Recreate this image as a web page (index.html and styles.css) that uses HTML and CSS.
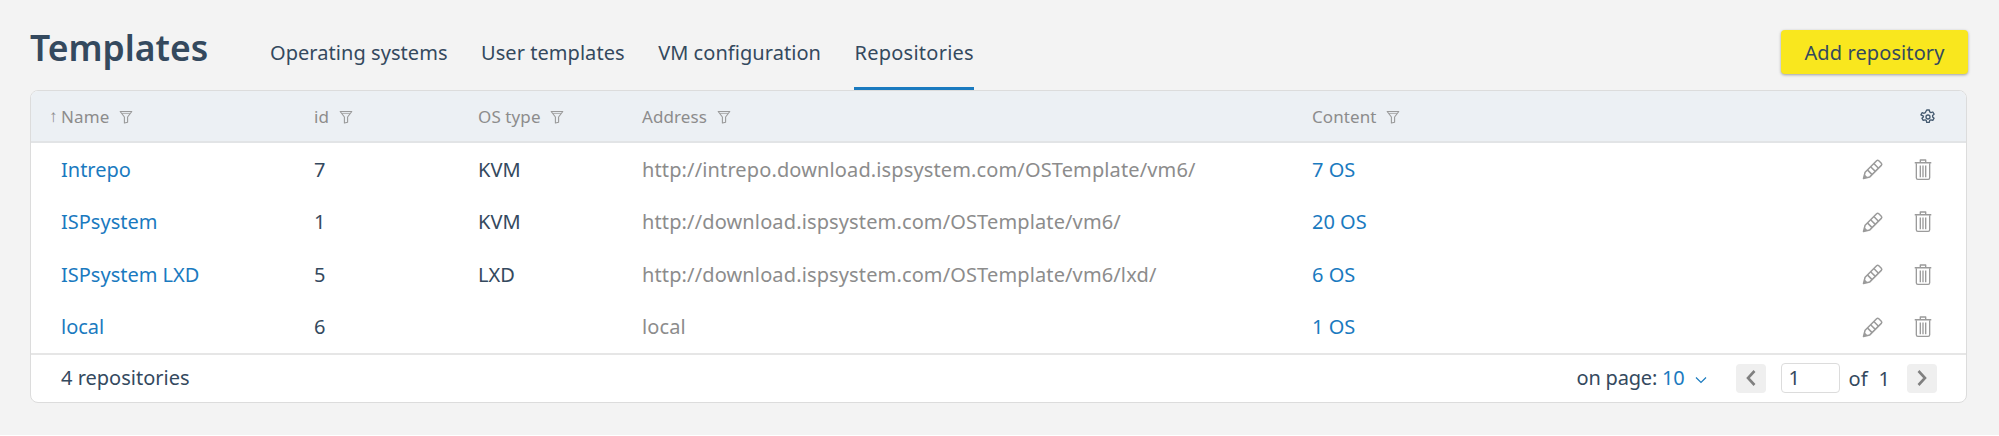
FILE: index.html
```html
<!DOCTYPE html>
<html lang="en">
<head>
<meta charset="utf-8">
<title>Templates</title>
<link rel="stylesheet" href="styles.css">
</head>
<body>
<svg class="defs" width="0" height="0" aria-hidden="true">
  <symbol id="i-filter" viewBox="0 0 14 14"><path d="M1.2 1.5h11.6L8.6 7v5.2L5.4 13V7z" fill="none" stroke="currentColor" stroke-width="1.1" stroke-linejoin="round"/><path d="M3 3.4h8" stroke="currentColor" stroke-width=".8"/></symbol>
  <symbol id="i-pencil" viewBox="0 0 22 22"><g fill="none" stroke="currentColor" stroke-width="1.5" stroke-linejoin="round"><path d="M1.5 20.5l1.6-6.3L14.6 2.7a1.6 1.6 0 0 1 2.2 0l2.5 2.5a1.6 1.6 0 0 1 0 2.2L7.8 18.9z"/><path d="M5.4 11.9l4.7 4.7M8.6 8.7l4.7 4.7M11.8 5.5l4.7 4.7"/></g><path d="M1.5 20.5l1-4.3 3.3 3.3z" fill="currentColor"/></symbol>
  <symbol id="i-trash" viewBox="0 0 20 24"><g fill="none" stroke="currentColor" stroke-width="1.5" stroke-linejoin="round"><path d="M.8 4.5h18.4M7 3.8V1.4h6v2.4"/><path d="M2.6 5v16.2c0 1 .7 1.7 1.7 1.7h11.4c1 0 1.7-.7 1.7-1.7V5"/><path d="M7 7.5v13M10 7.5v13M13 7.5v13"/></g></symbol>
  <symbol id="i-gear" viewBox="0 0 16 16"><g fill="none" stroke="currentColor"><path stroke-width="1.3" stroke-linejoin="round" d="M6.7 1h2.6l.4 1.9 1.2.7 1.9-.6 1.3 2.2-1.5 1.3v1.4l1.5 1.3-1.3 2.2-1.9-.6-1.2.7-.4 1.9H6.7l-.4-1.9-1.2-.7-1.9.6-1.3-2.2 1.5-1.3V7.2L.9 5.9l1.3-2.2 1.9.6 1.2-.7z"/><circle cx="8" cy="8" r="2" stroke-width="1.3"/></g></symbol>
</svg>
<div class="page">
  <header class="top">
    <h1 class="title">Templates</h1>
    <nav class="tabs">
      <a class="tab">Operating systems</a>
      <a class="tab">User templates</a>
      <a class="tab">VM configuration</a>
      <a class="tab tab-active">Repositories</a>
    </nav>
    <button class="add">Add repository</button>
  </header>
  <section class="card">
    <div class="row head">
      <div class="cell first"><span class="arrow">↑</span>Name <svg class="filter"><use href="#i-filter"/></svg></div>
      <div class="cell">id <svg class="filter"><use href="#i-filter"/></svg></div>
      <div class="cell">OS type <svg class="filter"><use href="#i-filter"/></svg></div>
      <div class="cell">Address <svg class="filter"><use href="#i-filter"/></svg></div>
      <div class="cell">Content <svg class="filter"><use href="#i-filter"/></svg></div>
      <div class="cell actions"><svg class="gear"><use href="#i-gear"/></svg></div>
    </div>
    <div class="row body-row">
      <div class="cell first"><a class="link">Intrepo</a></div>
      <div class="cell">7</div>
      <div class="cell">KVM</div>
      <div class="cell addr">http://intrepo.download.ispsystem.com/OSTemplate/vm6/</div>
      <div class="cell"><a class="link">7 OS</a></div>
      <div class="cell actions"><svg class="pencil"><use href="#i-pencil"/></svg><svg class="trash"><use href="#i-trash"/></svg></div>
    </div>
    <div class="row body-row">
      <div class="cell first"><a class="link">ISPsystem</a></div>
      <div class="cell">1</div>
      <div class="cell">KVM</div>
      <div class="cell addr">http://download.ispsystem.com/OSTemplate/vm6/</div>
      <div class="cell"><a class="link">20 OS</a></div>
      <div class="cell actions"><svg class="pencil"><use href="#i-pencil"/></svg><svg class="trash"><use href="#i-trash"/></svg></div>
    </div>
    <div class="row body-row">
      <div class="cell first"><a class="link">ISPsystem LXD</a></div>
      <div class="cell">5</div>
      <div class="cell">LXD</div>
      <div class="cell addr">http://download.ispsystem.com/OSTemplate/vm6/lxd/</div>
      <div class="cell"><a class="link">6 OS</a></div>
      <div class="cell actions"><svg class="pencil"><use href="#i-pencil"/></svg><svg class="trash"><use href="#i-trash"/></svg></div>
    </div>
    <div class="row body-row">
      <div class="cell first"><a class="link">local</a></div>
      <div class="cell">6</div>
      <div class="cell"></div>
      <div class="cell addr">local</div>
      <div class="cell"><a class="link">1 OS</a></div>
      <div class="cell actions"><svg class="pencil"><use href="#i-pencil"/></svg><svg class="trash"><use href="#i-trash"/></svg></div>
    </div>
    <footer class="foot">
      <span class="count">4 repositories</span>
      <div class="pager">
        <span class="per">on page: <a class="link">10</a></span>
        <svg class="chev" viewBox="0 0 12 8"><path d="M1 1.5l5 5 5-5" fill="none" stroke="currentColor" stroke-width="1.2"/></svg>
        <button class="pg prev"><svg viewBox="0 0 12 18"><path d="M9.5 2L3 9l6.5 7" fill="none" stroke="currentColor" stroke-width="2.6"/></svg></button>
        <span class="pgin">1</span>
        <span class="of">of</span>
        <span class="tot">1</span>
        <button class="pg next"><svg viewBox="0 0 12 18"><path d="M2.5 2L9 9l-6.5 7" fill="none" stroke="currentColor" stroke-width="2.6"/></svg></button>
      </div>
    </footer>
  </section>
</div>
</body>
</html>
```
FILE: styles.css
```css
html { background: #fff; }
body {
  margin: 0;
  font-family: "Noto Sans", sans-serif;
  font-size: 20px;
  color: #34495e;
}
.defs { position: absolute; }
.page {
  height: 435px;
  box-sizing: border-box;
  padding: 30px 32px 0 30px;
  background: #f3f3f3;
  overflow: hidden;
}
.top {
  display: flex;
  align-items: flex-start;
  height: 60px;
}
.title {
  margin: 1px 0 0;
  width: 240px;
  font-size: 35.5px;
  line-height: 32px;
  font-weight: 600;
}
.tabs {
  display: flex;
  gap: 33.5px;
  height: 60px;
  box-sizing: border-box;
}
.tab {
  height: 60px;
  box-sizing: border-box;
  padding-top: 11px;
  line-height: 24px;
  letter-spacing: .05px;
}
.tab-active {
  border-bottom: 3px solid #1a7abf;
  letter-spacing: .25px;
}
.add {
  margin-left: auto;
  margin-right: -1px;
  width: 187px;
  height: 44px;
  border: 0;
  border-radius: 4px;
  background: #f9e71e;
  color: #34495e;
  font: inherit;
  letter-spacing: .1px;
  box-shadow: 0 1px 3px rgba(0,0,0,.35);
}
.card {
  background: #fff;
  border: 1px solid #dcdcdc;
  border-radius: 8px;
  overflow: hidden;
  height: 313px;
  box-sizing: border-box;
}
.row {
  display: grid;
  grid-template-columns: 283px 164px 164px 670px 1fr 140px;
  align-items: center;
}
.head {
  height: 52px;
  padding-top: 1px;
  background: #ecf0f4;
  border-bottom: 2px solid #e2e4e6;
  box-sizing: border-box;
  color: #8c8c8c;
  font-size: 17px;
  letter-spacing: .1px;
}
.body-row { height: 52.5px; }
.first { padding-left: 30px; position: relative; }
.arrow {
  position: absolute;
  left: 18px;
  top: -1px;
  font-size: 17px;
  color: #8c8c8c;
}
.filter { width: 14px; height: 14px; margin-left: 5px; vertical-align: -1px; color: #9a9a9a; }
.link { color: #1a7abf; }
.addr { color: #8c8c8c; letter-spacing: .13px; }
.actions {
  display: flex;
  justify-content: flex-end;
  align-items: center;
  padding-right: 34px;
}
.gear { width: 16px; height: 16px; color: #445a70; margin-right: -4px; }
.pencil { width: 22px; height: 22px; color: #9b9b9b; margin-right: 30px; }
.trash { width: 18px; height: 23px; color: #9b9b9b; }
.foot {
  display: flex;
  justify-content: space-between;
  align-items: center;
  height: 50px;
  border-top: 2px solid #e6e6e6;
  padding: 0 29px 2px 30px;
  box-sizing: border-box;
}
.count, .per { margin-bottom: 2px; }
.pager { display: flex; align-items: center; }
.per { letter-spacing: -.2px; }
.chev { width: 12px; height: 8px; margin: 3px 29px 0 10px; color: #1a7abf; }
.pg {
  width: 30px;
  height: 29px;
  padding: 0;
  border: 0;
  border-radius: 4px;
  background: #efefef;
  color: #808080;
  display: flex;
  align-items: center;
  justify-content: center;
}
.pg svg { width: 12px; height: 18px; }
.pgin {
  width: 59px;
  height: 30px;
  box-sizing: border-box;
  margin-left: 15px;
  padding-left: 7px;
  line-height: 28px;
  border: 1px solid #dcdcdc;
  border-radius: 4px;
  background: #fff;
}
.of { margin-left: 9px; }
.tot { margin-left: 11px; margin-right: 17px; }
```
